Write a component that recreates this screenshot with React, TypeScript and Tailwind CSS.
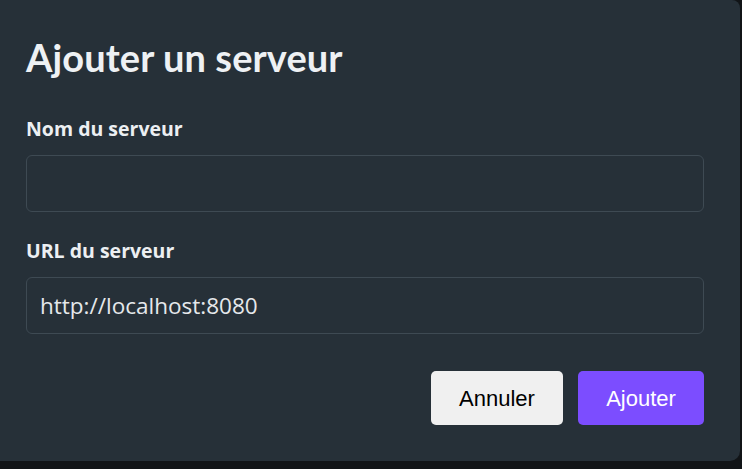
export default function App() {
  const font = { fontFamily: '"Open Sans", "Noto Sans", sans-serif' };
  return (
    <div className="w-[742px] h-[469px] bg-[#111417] overflow-hidden">
      <div
        className="w-[740px] h-[461px] bg-[#263038] rounded-br-[10px] rounded-tr-[8px] pl-[26px] pr-[36px] pt-[33px]"
        style={font}
      >
        <h1
          className="text-[38px] font-bold text-[#eef1f4] leading-[48px] tracking-[0.1px]"
          style={{ fontFamily: 'Lato, "Open Sans", sans-serif' }}
        >
          Ajouter un serveur
        </h1>
        <label className="block mt-[34px] text-[19.5px] font-bold text-[#eceff2] leading-[28px]">Nom du serveur</label>
        <input
          className="mt-[12px] block w-full h-[57px] rounded-[6px] border border-[#3e4a53] bg-[#263038] px-[13px] text-[22.5px] text-[#e5e8eb] outline-none"
          style={font}
        />
        <label className="block mt-[25px] text-[19.5px] font-bold text-[#eceff2] leading-[28px]">URL du serveur</label>
        <input
          className="mt-[12px] block w-full h-[57px] rounded-[6px] border border-[#3e4a53] bg-[#263038] px-[13px] text-[22.5px] text-[#e5e8eb] outline-none"
          style={font}
          defaultValue="http://localhost:8080"
        />
        <div className="flex justify-end gap-[15px] mt-[37px]" style={{ fontFamily: '"Liberation Sans", Arial, sans-serif' }}>
          <button className="w-[132px] h-[54px] rounded-[5px] bg-[#f0f0f0] text-[22px] text-black">Annuler</button>
          <button className="w-[126px] h-[54px] rounded-[5px] bg-[#7c4dff] text-[22px] text-white">Ajouter</button>
        </div>
      </div>
    </div>
  );
}
